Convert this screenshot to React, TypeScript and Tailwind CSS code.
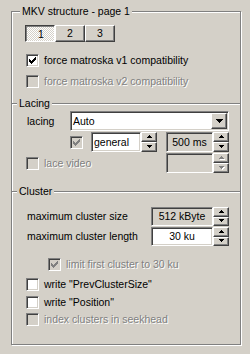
import React from 'react';

const sunken =
  'border border-t-[#808080] border-l-[#808080] border-r-white border-b-white shadow-[inset_1px_1px_#404040,inset_-1px_-1px_#d4d0c8]';
const raised =
  'border border-t-white border-l-white border-r-[#404040] border-b-[#404040] shadow-[inset_-1px_-1px_#808080] bg-[#d4d0c8]';
const disabledText = 'text-[#808080] [text-shadow:1px_1px_0_#fff]';

const Check = ({ checked = false, disabled = false }: { checked?: boolean; disabled?: boolean }) => {
    const fill = disabled ? '#808080' : '#000';
    return (
        <span className={`relative block h-[13px] w-[13px] shrink-0 ${sunken} ${disabled ? 'bg-[#d4d0c8]' : 'bg-white'}`}>
            {checked && (
                <svg className="absolute left-0 top-0" width="11" height="11" viewBox="0 0 11 11" shapeRendering="crispEdges">
                    <rect x="2" y="4" width="1" height="3" fill={fill} />
                    <rect x="3" y="5" width="1" height="3" fill={fill} />
                    <rect x="4" y="6" width="1" height="3" fill={fill} />
                    <rect x="5" y="5" width="1" height="3" fill={fill} />
                    <rect x="6" y="4" width="1" height="3" fill={fill} />
                    <rect x="7" y="3" width="1" height="3" fill={fill} />
                    <rect x="8" y="2" width="1" height="3" fill={fill} />
                </svg>
            )}
        </span>
    );
};

const Arrow = ({ up, disabled }: { up: boolean; disabled?: boolean }) => {
    const rows = up ? [[2, 0, 1], [1, 1, 3], [0, 2, 5]] : [[0, 0, 5], [1, 1, 3], [2, 2, 1]];
    return (
        <svg width="6" height="4" viewBox="0 0 6 4" shapeRendering="crispEdges">
            {disabled && rows.map(([x, y, w], i) => <rect key={'s' + i} x={x + 1} y={y + 1} width={w} height="1" fill="#fff" />)}
            {rows.map(([x, y, w], i) => (
                <rect key={i} x={x} y={y} width={w} height="1" fill={disabled ? '#808080' : '#000'} />
            ))}
        </svg>
    );
};

const Spin = ({ h = 'h-[20px]', disabled = false }: { h?: string; disabled?: boolean }) => (
    <div className={`flex w-[16px] shrink-0 flex-col ${h}`}>
        <div className={`flex flex-1 items-center justify-center pl-[1px] ${raised}`}>
            <Arrow up disabled={disabled} />
        </div>
        <div className={`flex flex-1 items-center justify-center pl-[1px] ${raised}`}>
            <Arrow up={false} disabled={disabled} />
        </div>
    </div>
);

const Field = ({ className, children }: { className: string; children?: React.ReactNode }) => (
    <div className={`flex shrink-0 items-center ${sunken} ${className}`}>{children}</div>
);

const CheckRow = ({ label, checked, disabled, className }: { label: string; checked?: boolean; disabled?: boolean; className: string }) => (
    <div className={`flex h-[13px] items-center ${className}`}>
        <Check checked={checked} disabled={disabled} />
        <span className={`ml-[5px] whitespace-nowrap ${disabled ? disabledText : ''}`}>{label}</span>
    </div>
);

const Divider = ({ title, className }: { title: string; className: string }) => (
    <>
        <div className={`h-0 border-t border-[#808080] shadow-[0_1px_white] ${className}`} />
        <div className="-mt-[7px] ml-[5px] h-[13px] w-fit bg-[#d4d0c8] px-[2px]">{title}</div>
    </>
);

const App = () => {
    return (
        <div className="h-[354px] w-[250px] overflow-hidden bg-[#d4d0c8] pl-[11px] pt-[11px] font-['Liberation_Sans',Arial,sans-serif] text-[10.5px] leading-[13px] text-black">
            <div className="flex h-[334px] w-[230px] flex-col border border-[#808080] shadow-[inset_1px_1px_white,1px_1px_white]">
                <div className="-mt-[7px] ml-[8px] h-[13px] w-fit bg-[#d4d0c8] px-[2px]">MKV structure - page 1</div>

                <div className="ml-[13px] mt-[7px] flex">
                    <div className="flex h-[17px] w-[30px] items-center justify-center border border-t-[#404040] border-l-[#404040] border-r-white border-b-white bg-[image:repeating-conic-gradient(#fff_0_25%,#d4d0c8_0_50%)] bg-[length:2px_2px] pl-[2px] pt-[1px] shadow-[inset_1px_1px_#808080]">
                        1
                    </div>
                    <div className={`flex h-[17px] w-[30px] items-center justify-center ${raised}`}>2</div>
                    <div className={`flex h-[17px] w-[30px] items-center justify-center ${raised}`}>3</div>
                </div>

                <CheckRow className="ml-[14px] mt-[12px]" label="force matroska v1 compatibility" checked />
                <CheckRow className="ml-[14px] mt-[8px]" label="force matroska v2 compatibility" disabled />

                <Divider className="mt-[15px]" title="Lacing" />

                <div className="mt-[1px] flex h-[20px] items-center">
                    <span className="ml-[15px] w-[43px]">lacing</span>
                    <Field className="h-[20px] w-[159px] justify-between bg-white pl-[2px]">
                        <span>Auto</span>
                        <div className={`mr-[1px] flex h-[16px] w-[16px] items-center justify-center ${raised}`}>
                            <svg width="7" height="4" viewBox="0 0 7 4" shapeRendering="crispEdges">
                                <rect x="0" y="0" width="7" height="1" fill="#000" />
                                <rect x="1" y="1" width="5" height="1" fill="#000" />
                                <rect x="2" y="2" width="3" height="1" fill="#000" />
                                <rect x="3" y="3" width="1" height="1" fill="#000" />
                            </svg>
                        </div>
                    </Field>
                </div>

                <div className="mt-[1px] flex h-[20px] items-center pl-[58px]">
                    <Check checked disabled />
                    <Field className="ml-[8px] h-[20px] w-[50px] bg-white pl-[2px]">general</Field>
                    <Spin />
                    <Field className="ml-[9px] h-[20px] w-[47px] justify-center bg-[#d4d0c8]">500 ms</Field>
                    <Spin />
                </div>

                <div className="mt-[1px] flex h-[20px] items-center pl-[14px] pr-[11px]">
                    <Check disabled />
                    <span className={`ml-[5px] ${disabledText}`}>lace video</span>
                    <Field className="ml-auto h-[20px] w-[47px] bg-[#d4d0c8]" />
                    <Spin disabled />
                </div>

                <Divider className="mt-[18px]" title="Cluster" />

                <div className="mt-[9px] flex h-[19px] items-center pl-[15px] pr-[11px]">
                    <span>maximum cluster size</span>
                    <Field className="ml-auto h-[19px] w-[62px] justify-center bg-[#d4d0c8]">512 kByte</Field>
                    <Spin h="h-[19px]" />
                </div>
                <div className="mt-[1px] flex h-[19px] items-center pl-[15px] pr-[11px]">
                    <span>maximum cluster length</span>
                    <Field className="ml-auto h-[19px] w-[62px] justify-center bg-white">30 ku</Field>
                    <Spin h="h-[19px]" />
                </div>

                <CheckRow className="ml-[36px] mt-[12px]" label="limit first cluster to 30 ku" checked disabled />
                <CheckRow className="ml-[14px] mt-[7px]" label={'write "PrevClusterSize"'} />
                <CheckRow className="ml-[14px] mt-[5px]" label={'write "Position"'} />
                <CheckRow className="ml-[14px] mt-[4px]" label="index clusters in seekhead" disabled />
            </div>
        </div>
    );
};

export default App;
